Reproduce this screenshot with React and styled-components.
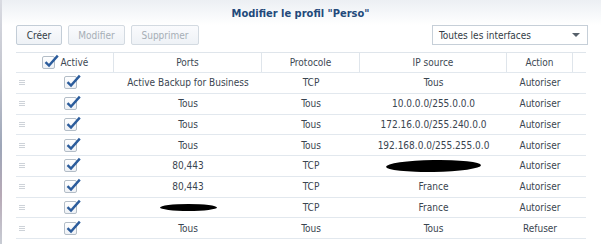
import React from "react";
import styled, { createGlobalStyle } from "styled-components";

const Global = createGlobalStyle`
  html, body { margin: 0; padding: 0; background: #fff; }
  body { font-family: "DejaVu Sans Condensed", "DejaVu Sans", "Liberation Sans", sans-serif; font-stretch: condensed; font-size: 10px; color: #3a4550; }
  * { box-sizing: border-box; }
`;

const Page = styled.div`
  display: flex;
  width: 601px;
  height: 244px;
  overflow: hidden;
`;

const Edge = styled.div`
  width: 2px;
  flex: none;
  background: linear-gradient(#d9dbe2 0%, #c4c6cf 30%, #9da6b8 60%, #b7a9b6 80%, #c8ccd4 100%);
`;

const Window = styled.div`
  flex: 1;
  display: flex;
  flex-direction: column;
  background: #fff;
`;

const TitleBar = styled.div`
  height: 25px;
  display: flex;
  align-items: center;
  justify-content: center;
  padding-top: 2px;
  padding-right: 2px;
  background: linear-gradient(#eceff3 0%, #f6f8fa 55%, #ffffff 100%);
  font-weight: bold;
  font-size: 11px;
  color: #22497a;
`;

const Toolbar = styled.div`
  display: flex;
  align-items: center;
  gap: 6px;
  padding: 0 13px 0 14px;
  height: 20px;
`;

const Button = styled.div`
  height: 20px;
  display: flex;
  align-items: center;
  justify-content: center;
  width: ${(p) => p.$w}px;
  border: 1px solid ${(p) => (p.$disabled ? "#d3dae1" : "#c3cdd7")};
  border-radius: 2px;
  background: linear-gradient(#fafbfd, #eef2f6);
  color: ${(p) => (p.$disabled ? "#a6aeb6" : "#323c46")};
`;

const Spacer = styled.div`
  flex: 1;
`;

const Select = styled.div`
  width: 156px;
  height: 20px;
  display: flex;
  align-items: center;
  justify-content: space-between;
  padding: 0 7px 0 6px;
  border: 1px solid #c6cfd8;
  background: #fff;
  color: #323c46;
`;

const Caret = styled.div`
  width: 0;
  height: 0;
  border-left: 4px solid transparent;
  border-right: 4px solid transparent;
  border-top: 4px solid #56606a;
`;

const Table = styled.div`
  margin: 7px 0 0 14px;
  width: 570px;
`;

const Row = styled.div`
  display: grid;
  grid-template-columns: 98px 148px 98px 147px 66px 13px;
  height: ${(p) => (p.$header ? 21 : 20.75)}px;
  border-top: ${(p) => (p.$header ? "1px solid #dfe5eb" : "none")};
  border-bottom: 1px solid #e2e8ee;
  align-items: stretch;
`;

const Cell = styled.div`
  display: flex;
  align-items: center;
  justify-content: center;
  white-space: nowrap;
  color: ${(p) => (p.$header ? "#3d4854" : "#3a4550")};
  border-right: ${(p) => (p.$header ? "1px solid #dfe5eb" : "none")};
  &:last-child { border-right: none; }
`;

const FirstCell = styled.div`
  display: flex;
  align-items: center;
  padding-left: 3px;
`;

const HeaderFirst = styled(Cell)`
  gap: 6px;
  padding-left: 1px;
`;

const Handle = styled.div`
  width: 6px;
  height: 5px;
  display: flex;
  flex-direction: column;
  justify-content: space-between;
  margin-right: 39px;
  & > span {
    display: block;
    height: 1px;
    background: #cdd2d8;
  }
`;

const Box = styled.div`
  position: relative;
  width: 13px;
  height: 13px;
  flex: none;
  border: 1px solid #b3bdc7;
  border-radius: 2px;
  background: linear-gradient(#ffffff, #eef1f5);
`;

const Tick = styled.svg`
  position: absolute;
  left: 1px;
  top: -3px;
  width: 14px;
  height: 14px;
  overflow: visible;
`;

const Blob = styled.div`
  width: ${(p) => p.$w}px;
  height: ${(p) => p.$h}px;
  background: #000;
  border-radius: 50%;
  transform: rotate(${(p) => p.$r || 0}deg);
`;

function Check() {
  return (
    <Box>
      <Tick viewBox="0 0 14 14">
        <path d="M1.5 8.2 L5 11.6 L13.8 1.6" fill="none" stroke="#2b5c9c" strokeWidth="2.4" strokeLinejoin="miter" strokeLinecap="butt" />
      </Tick>
    </Box>
  );
}

const rows = [
  ["Active Backup for Business", "TCP", "Tous", "Autoriser"],
  ["Tous", "Tous", "10.0.0.0/255.0.0.0", "Autoriser"],
  ["Tous", "Tous", "172.16.0.0/255.240.0.0", "Autoriser"],
  ["Tous", "Tous", "192.168.0.0/255.255.0.0", "Autoriser"],
  ["80,443", "TCP", { blob: [95, 12, -1] }, "Autoriser"],
  ["80,443", "TCP", "France", "Autoriser"],
  [{ blob: [57, 7, 0] }, "TCP", "France", "Autoriser"],
  ["Tous", "Tous", "Tous", "Refuser"],
];

function Content({ v }) {
  if (typeof v === "object") return <Blob $w={v.blob[0]} $h={v.blob[1]} $r={v.blob[2]} />;
  return v;
}

export default function App() {
  return (
    <>
      <Global />
      <Page>
        <Edge />
        <Window>
          <TitleBar>Modifier le profil "Perso"</TitleBar>
          <Toolbar>
            <Button $w={46}>Créer</Button>
            <Button $w={57} $disabled>Modifier</Button>
            <Button $w={68} $disabled>Supprimer</Button>
            <Spacer />
            <Select>
              <span>Toutes les interfaces</span>
              <Caret />
            </Select>
          </Toolbar>
          <Table>
            <Row $header>
              <HeaderFirst $header>
                <Check />
                <span>Activé</span>
              </HeaderFirst>
              <Cell $header>Ports</Cell>
              <Cell $header>Protocole</Cell>
              <Cell $header>IP source</Cell>
              <Cell $header>Action</Cell>
              <Cell $header />
            </Row>
            {rows.map((r, i) => (
              <Row key={i}>
                <FirstCell>
                  <Handle>
                    <span />
                    <span />
                    <span />
                  </Handle>
                  <Check />
                </FirstCell>
                <Cell><Content v={r[0]} /></Cell>
                <Cell><Content v={r[1]} /></Cell>
                <Cell><Content v={r[2]} /></Cell>
                <Cell><Content v={r[3]} /></Cell>
                <Cell />
              </Row>
            ))}
          </Table>
        </Window>
      </Page>
    </>
  );
}
